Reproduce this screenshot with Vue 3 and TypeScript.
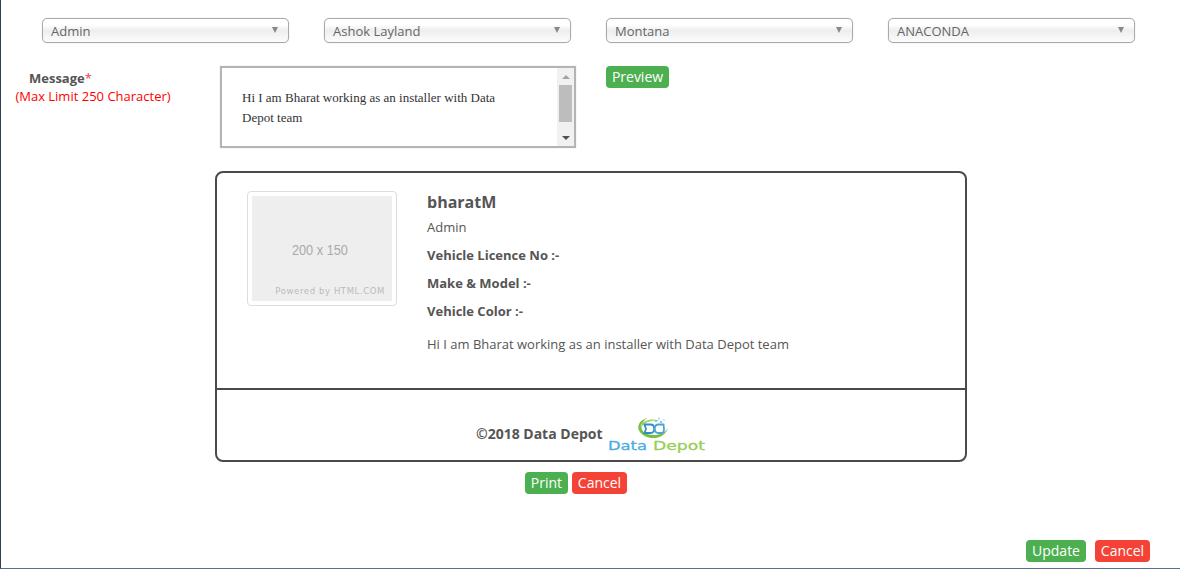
<script setup lang="ts">
const filters = ["Admin", "Ashok Layland", "Montana", "ANACONDA"];
const message = "Hi I am Bharat working as an installer with Data Depot team";
const details = ["Vehicle Licence No :-", "Make & Model :-", "Vehicle Color :-"];
</script>

<template>
  <div class="page">
    <div class="filters">
      <div v-for="item in filters" :key="item" class="select">
        <span>{{ item }}</span>
        <i class="caret"></i>
      </div>
    </div>

    <div class="message-row">
      <div class="message-label">
        <div class="label-title">Message<span class="star">*</span></div>
        <div class="limit">(Max Limit 250 Character)</div>
      </div>
      <div class="textarea">
        <div class="textarea-text">{{ message }}</div>
        <div class="scrollbar">
          <i class="arrow-up"></i>
          <div class="track"><div class="thumb"></div></div>
          <i class="arrow-down"></i>
        </div>
      </div>
      <button class="btn green preview">Preview</button>
    </div>

    <div class="card">
      <div class="card-body">
        <div class="thumbnail">
          <div class="placeholder">
            <span class="size">200 x 150</span>
            <span class="powered">Powered by HTML.COM</span>
          </div>
        </div>
        <div class="info">
          <div class="name">bharatM</div>
          <div class="role">Admin</div>
          <div v-for="d in details" :key="d" class="detail">{{ d }}</div>
          <div class="text">{{ message }}</div>
        </div>
      </div>
      <div class="card-footer">
        <span class="copy">©2018 Data Depot</span>
        <svg class="logo" width="100" height="36" viewBox="0 0 100 36">
          <path d="M40 1C33 3 30.500 8 31.500 12C33 18 41 21.500 48 21C54 20.500 59 17 61 11C58 16 53 18 47 18C40 18 35 15 34.500 11C34 7.500 36 4 40 1z" fill="#76bd4a" />
          <path d="M33 9C36 3 45 1 53 4C46 3 39 4.500 35.500 9z" fill="#a6d56e" />
          <path d="M37.500 7.500h6c5 0 5 8.500 0 8.500h-6l1.500-4z" fill="none" stroke="#2f8fc4" stroke-width="1.800" />
          <path d="M56.500 7.500h-5c-5 0-5 8.500 0 8.500h3c1.500 0 2.500-1.500 2.500-4z" fill="none" stroke="#4ba3d6" stroke-width="1.800" />
          <circle cx="49" cy="4" r="1" fill="#5fb6e5" />
          <circle cx="54" cy="5" r="1.100" fill="#5fb6e5" />
          <circle cx="57" cy="3" r="0.800" fill="#8fd0ef" />
          <circle cx="52" cy="1.500" r="0.900" fill="#8fd0ef" />
          <text x="1" y="33" class="logo-data" textLength="39" lengthAdjust="spacingAndGlyphs">Data</text>
          <text x="46" y="33" class="logo-depot" textLength="52" lengthAdjust="spacingAndGlyphs">Depot</text>
        </svg>
      </div>
    </div>

    <div class="card-actions">
      <button class="btn green print">Print</button>
      <button class="btn red cancel">Cancel</button>
    </div>

    <div class="page-actions">
      <button class="btn green update">Update</button>
      <button class="btn red cancel">Cancel</button>
    </div>
  </div>
</template>

<style>
html,
body {
  margin: 0;
  background: #fff;
}
</style>

<style scoped>
.page {
  box-sizing: border-box;
  width: 1180px;
  height: 569px;
  display: flex;
  flex-direction: column;
  overflow: hidden;
  background: #fff;
  border-left: 1px solid #2a3f54;
  border-bottom: 1px solid #5a6f8c;
  font-family: "Open Sans", sans-serif;
  font-size: 13px;
  color: #555;
}

.filters {
  display: flex;
  gap: 35px;
  padding: 18px 0 0 41px;
}

.select {
  box-sizing: border-box;
  width: 247px;
  height: 25px;
  display: flex;
  align-items: center;
  justify-content: space-between;
  padding: 1px 10px 0 8px;
  border: 1px solid #aaa;
  border-radius: 5px;
  background: linear-gradient(#fff 0%, #fff 25%, #eee 50%, #fcfcfc 100%);
  box-shadow: 0 0 1px #bbb;
  font-size: 13px;
  color: #666;
}

.caret {
  width: 0;
  height: 0;
  margin-top: -3px;
  border-left: 3.5px solid transparent;
  border-right: 3.5px solid transparent;
  border-top: 6px solid #888;
}

.message-row {
  display: flex;
  margin-top: 23px;
}

.message-label {
  width: 184px;
  text-align: center;
  line-height: 18px;
  padding-top: 3px;
}

.label-title {
  font-weight: 700;
  padding-left: 28px;
  text-align: left;
}

.star {
  color: #e8404f;
  font-weight: 400;
}

.limit {
  color: #f00;
  font-size: 13px;
}

.textarea {
  box-sizing: border-box;
  width: 356px;
  height: 82px;
  margin-left: 35px;
  display: flex;
  border: 2px solid #b4b4b4;
  box-shadow: 0 0 1px #ccc;
  background: #fff;
}

.textarea-text {
  flex: 1;
  padding: 20px 40px 0 20px;
  font-family: "Liberation Serif", serif;
  font-size: 13px;
  line-height: 20px;
  color: #333;
}

.scrollbar {
  width: 17px;
  display: flex;
  flex-direction: column;
  align-items: center;
  background: #f1f1f1;
}

.arrow-up,
.arrow-down {
  flex: none;
  width: 0;
  height: 0;
  border-left: 4px solid transparent;
  border-right: 4px solid transparent;
}

.arrow-up {
  margin: 7px 0 6px;
  border-bottom: 4px solid #a3a3a3;
}

.arrow-down {
  margin: 7px 0 6px;
  border-top: 4px solid #505050;
}

.track {
  flex: 1;
  width: 100%;
  display: flex;
  justify-content: center;
}

.thumb {
  width: 13px;
  height: 37px;
  background: #bdbdbd;
}

.btn {
  display: block;
  box-sizing: border-box;
  height: 22px;
  padding: 0;
  border: 0;
  border-radius: 4px;
  font-family: "Open Sans", sans-serif;
  font-size: 14px;
  line-height: 22px;
  color: #fff;
  text-align: center;
}

.green {
  background: #4caf50;
}

.red {
  background: #f44336;
}

.preview {
  width: 63px;
  margin-left: 30px;
}

.card {
  box-sizing: border-box;
  width: 752px;
  height: 291px;
  margin: 23px 0 0 214px;
  display: flex;
  flex-direction: column;
  border: 2px solid #4a4a4a;
  border-radius: 8px;
}

.card-body {
  box-sizing: border-box;
  height: 217px;
  display: flex;
  padding: 18px 0 0 30px;
  border-bottom: 2px solid #4a4a4a;
}

.thumbnail {
  box-sizing: border-box;
  width: 150px;
  height: 115px;
  padding: 4px;
  border: 1px solid #ddd;
  border-radius: 4px;
}

.placeholder {
  height: 105px;
  display: flex;
  flex-direction: column;
  align-items: center;
  background: #eee;
}

.size {
  margin: 45px 4px 0 0;
  font-family: "Liberation Sans", sans-serif;
  font-size: 15px;
  line-height: 18px;
  color: #aaa;
  transform: scaleX(0.85);
}

.powered {
  align-self: flex-end;
  margin: 26px 7px 0 0;
  font-family: "DejaVu Sans", sans-serif;
  font-size: 8.5px;
  line-height: 12px;
  letter-spacing: 0.6px;
  color: #bbb;
}

.info {
  margin-left: 30px;
}

.name {
  font-size: 16px;
  font-weight: 700;
  line-height: 22px;
}

.role {
  margin-top: 5px;
  line-height: 18px;
}

.detail {
  margin-top: 10px;
  font-weight: 700;
  line-height: 18px;
}

.text {
  margin-top: 15px;
  line-height: 18px;
}

.card-footer {
  flex: 1;
  display: flex;
  align-items: flex-start;
  padding: 28px 0 0 259px;
}

.copy {
  font-weight: 700;
  font-size: 14px;
  line-height: 32px;
}

.logo {
  flex: none;
  margin: -1px 0 0 4px;
}

.logo-data,
.logo-depot {
  font-family: "DejaVu Sans", sans-serif;
  font-size: 13px;
  stroke-width: 0.3;
}

.logo-data {
  fill: #49ade0;
  stroke: #49ade0;
}

.logo-depot {
  fill: #98cf55;
  stroke: #98cf55;
}

.card-actions {
  display: flex;
  gap: 4px;
  margin: 10px 0 0 524px;
}

.print {
  width: 43px;
}

.cancel {
  width: 55px;
}

.page-actions {
  display: flex;
  gap: 9px;
  margin: auto 0 6px 1025px;
}

.update {
  width: 60px;
}
</style>
